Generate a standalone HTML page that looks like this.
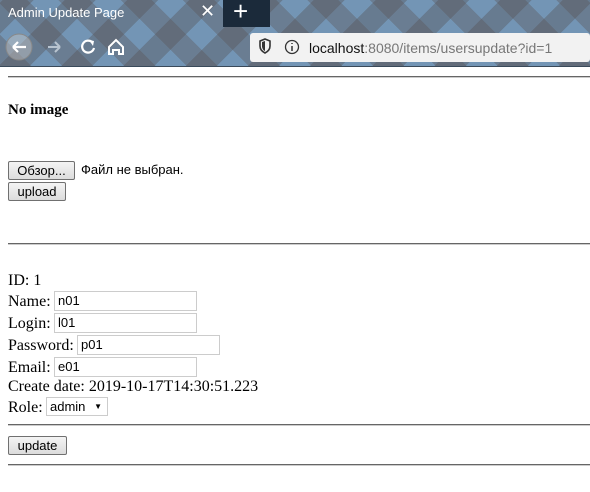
<!DOCTYPE html>
<html><head><meta charset="utf-8"><style>
*{margin:0;padding:0;box-sizing:border-box}
body{width:590px;height:492px;overflow:hidden;background:#fff;font-family:"Liberation Serif",serif;font-size:16px;color:#000;position:relative}
.chrome{position:absolute;left:0;top:0;width:590px;height:67px;
background:
repeating-linear-gradient(45deg,rgba(90,80,80,.35) 0 22px,rgba(0,0,0,0) 22px 44px),
repeating-linear-gradient(-45deg,rgba(80,75,75,.35) 0 22px,rgba(0,0,0,0) 22px 44px),
#7395b5;border-bottom:1px solid #3a4a5a}
.tabtitle{position:absolute;left:8px;top:5px;color:#fff;font:13px "Liberation Sans",sans-serif}
.x{position:absolute;left:200px;top:1px;color:#fff;font:18px "Liberation Sans",sans-serif}
.newtab{position:absolute;left:223px;top:0;width:47px;height:27px;background:#1b2a3a}
.plus{position:absolute;left:233px;top:-4px;color:#fff;font:26px "Liberation Sans",sans-serif}
.url{position:absolute;left:250px;top:33px;width:340px;height:29px;background:#f2f2f2;border-radius:3px}
.urltext{position:absolute;left:309px;top:40px;font:14px "Liberation Sans",sans-serif;color:#777}
.urltext b{font-weight:normal;color:#111}
.abs{position:absolute;white-space:nowrap}
hr{position:absolute;left:8px;width:590px;height:2px;border:none;border-top:1px solid #666;border-bottom:1px solid #ccc}
.btn{position:absolute;height:19px;border:1px solid #707070;border-radius:2px;background:linear-gradient(#f4f4f4,#dcdcdc);font:13px "Liberation Sans",sans-serif;text-align:center;line-height:17px}
.inp{position:absolute;height:20px;border:1px solid #ccc;background:#fff;font:13px "Liberation Sans",sans-serif;padding-left:3px;line-height:18px}
.sans{font:13px "Liberation Sans",sans-serif}
</style></head><body>
<div class="chrome">
<div class="tabtitle">Admin Update Page</div>
<div class="x">✕</div>
<div class="newtab"></div><div class="plus">+</div>
<svg style="position:absolute;left:3px;top:32px" width="130" height="32">
<circle cx="16" cy="15" r="13" fill="rgba(200,200,200,.45)" stroke="#888"/>
<path d="M10 15h13M10 15l5-5M10 15l5 5" stroke="#fff" stroke-width="2.2" fill="none"/>
<path d="M45 15h12M57 15l-5-5M57 15l-5 5" stroke="#b8c4d0" stroke-width="2" fill="none"/>
<path d="M89 10a6 6 0 1 0 2 6" stroke="#fff" stroke-width="2.2" fill="none"/><path d="M86 8l5 1-1 5z" fill="#fff"/>
<path d="M106 15l7-7 7 7v7h-4v-4h-6v4h-4z" stroke="#fff" stroke-width="2" fill="none"/>
</svg>
<div class="url"></div>
<svg style="position:absolute;left:258px;top:38px" width="50" height="20">
<path d="M2 3l5-2 5 2v5c0 4-3 6-5 7-2-1-5-3-5-7z" fill="none" stroke="#333" stroke-width="1.6"/><path d="M7 3v10c-1 0-3-2-3-5V4z" fill="#333"/>
<circle cx="34" cy="9" r="6.5" fill="none" stroke="#333" stroke-width="1.3"/><path d="M34 8v5M34 5v1" stroke="#333" stroke-width="1.5"/>
</svg>
<div class="urltext"><b>localhost</b>:8080/items/usersupdate?id=1</div>
</div>
<hr style="top:76px">
<div class="abs" style="left:8px;top:102px;font-weight:bold;font-size:15px">No image</div>
<div class="btn" style="left:8px;top:161px;width:67px">Обзор...</div>
<div class="abs sans" style="left:81px;top:162px">Файл не выбран.</div>
<div class="btn" style="left:8px;top:182px;width:58px">upload</div>
<hr style="top:243px">
<div class="abs" style="left:8px;top:272px">ID: 1</div>
<div class="abs" style="left:8px;top:293px">Name:</div><div class="inp" style="left:54px;top:291px;width:143px">n01</div>
<div class="abs" style="left:8px;top:315px">Login:</div><div class="inp" style="left:54px;top:313px;width:143px">l01</div>
<div class="abs" style="left:8px;top:337px">Password:</div><div class="inp" style="left:77px;top:335px;width:143px">p01</div>
<div class="abs" style="left:8px;top:359px">Email:</div><div class="inp" style="left:54px;top:357px;width:143px">e01</div>
<div class="abs" style="left:8px;top:378px">Create date: 2019-10-17T14:30:51.223</div>
<div class="abs" style="left:8px;top:399px">Role:</div>
<div class="inp" style="left:46px;top:397px;width:62px;height:19px;line-height:17px">admin <span style="font-size:8px;position:absolute;right:5px">▼</span></div>
<hr style="top:424px">
<div class="btn" style="left:8px;top:436px;width:59px">update</div>
<hr style="top:464px">
</body></html>
